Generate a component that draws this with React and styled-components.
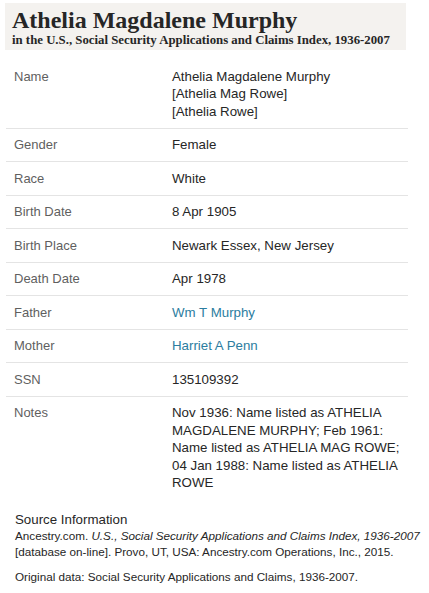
import React from "react";
import styled, { createGlobalStyle } from "styled-components";

const GlobalStyle = createGlobalStyle`
  body {
    margin: 0;
    background: #ffffff;
    font-family: "Liberation Sans", Arial, sans-serif;
  }
`

const rows = [
  { label: "Name", value: ["Athelia Magdalene Murphy", "[Athelia Mag Rowe]", "[Athelia Rowe]"] },
  { label: "Gender", value: ["Female"] },
  { label: "Race", value: ["White"] },
  { label: "Birth Date", value: ["8 Apr 1905"] },
  { label: "Birth Place", value: ["Newark Essex, New Jersey"] },
  { label: "Death Date", value: ["Apr 1978"] },
  { label: "Father", value: ["Wm T Murphy"], link: true },
  { label: "Mother", value: ["Harriet A Penn"], link: true },
  { label: "SSN", value: ["135109392"] },
  {
    label: "Notes",
    value: [
      "Nov 1936: Name listed as ATHELIA",
      "MAGDALENE MURPHY; Feb 1961:",
      "Name listed as ATHELIA MAG ROWE;",
      "04 Jan 1988: Name listed as ATHELIA",
      "ROWE",
    ],
    last: true,
  },
]

export default function App() {
  return (
    <Page>
      <GlobalStyle />
      <Header>
        <Title>Athelia Magdalene Murphy</Title>
        <Subtitle>in the U.S., Social Security Applications and Claims Index, 1936-2007</Subtitle>
      </Header>
      <Table>
        {rows.map((row) => (
          <Row key={row.label} $last={row.last}>
            <Label>{row.label}</Label>
            <Value>
              {row.value.map((line) =>
                row.link ? (
                  <Link key={line} href="#">{line}</Link>
                ) : (
                  <Line key={line}>{line}</Line>
                )
              )}
            </Value>
          </Row>
        ))}
      </Table>
      <Source>
        <SourceTitle>Source Information</SourceTitle>
        <SourceText>
          Ancestry.com. <i>U.S., Social Security Applications and Claims Index, 1936-2007</i>
        </SourceText>
        <SourceText>
          [database on-line]. Provo, UT, USA: Ancestry.com Operations, Inc., 2015.
        </SourceText>
        <SourceText $spaced>
          Original data: Social Security Applications and Claims, 1936-2007.
        </SourceText>
      </Source>
    </Page>
  )
}

const Page = styled.div`
  width: 429px;
  padding-top: 3px;
`

const Header = styled.div`
  margin-left: 5px;
  width: 401px;
  height: 47px;
  box-sizing: border-box;
  background: #f4f2ef;
  padding: 4px 0 0 7px;
  font-family: "Liberation Serif", "Times New Roman", serif;
  font-weight: bold;
  color: #262626;
`

const Title = styled.div`
  font-size: 24px;
  line-height: 26px;
`

const Subtitle = styled.div`
  font-size: 12.8px;
  line-height: 15px;
`

const Table = styled.div`
  margin: 10px 0 0 6px;
  width: 402px;
`

const Row = styled.div`
  display: grid;
  grid-template-columns: 158px 1fr;
  border-bottom: ${(props) => (props.$last ? "none" : "1px solid #e4e4e4")};
  padding: 7.5px 0;
  font-size: 13px;
  line-height: 17.5px;
`

const Label = styled.div`
  padding-left: 8px;
  color: #5f5f5f;
`

const Value = styled.div`
  padding-left: 8px;
  color: #262626;
  font-size: 13.3px;
  white-space: nowrap;
`

const Line = styled.div``

const Link = styled.a`
  display: block;
  color: #2b7da0;
  text-decoration: none;
`

const Source = styled.div`
  margin: 12px 0 0 15px;
  color: #262626;
`

const SourceTitle = styled.div`
  font-size: 13.3px;
  line-height: 17px;
`

const SourceText = styled.div`
  font-size: 11.7px;
  line-height: 16px;
  white-space: nowrap;
  margin-top: ${(props) => (props.$spaced ? "9px" : "0")};
`
